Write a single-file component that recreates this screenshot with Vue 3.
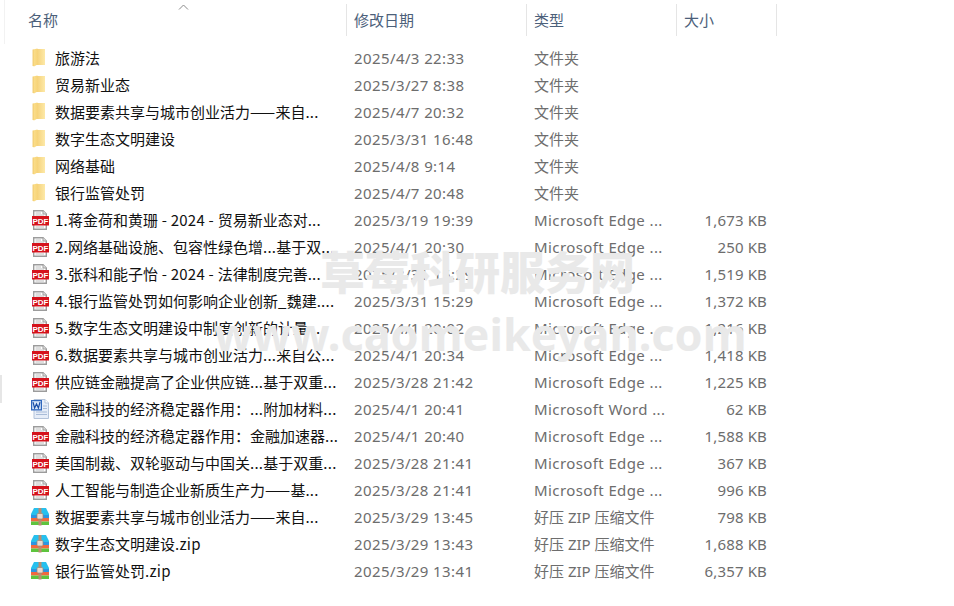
<script setup>
const PDF = 'pdf', DIR = 'dir', DOC = 'doc', ZIP = 'zip'
const columns = [
  { label: '名称', cls: 'c-name' },
  { label: '修改日期', cls: 'c-date' },
  { label: '类型', cls: 'c-type' },
  { label: '大小', cls: 'c-size' }
]
const edge = 'Microsoft Edge ...'
const splitName = (text) =>
  text.split(/([\x00-\x7f—]+)/).filter(Boolean).map((t) => ({
    t,
    latin: /^[\x00-\x7f—]/.test(t)
  }))
const rows = [
  [DIR, '旅游法', '2025/4/3 22:33', '文件夹', ''],
  [DIR, '贸易新业态', '2025/3/27 8:38', '文件夹', ''],
  [DIR, '数据要素共享与城市创业活力——来自...', '2025/4/7 20:32', '文件夹', ''],
  [DIR, '数字生态文明建设', '2025/3/31 16:48', '文件夹', ''],
  [DIR, '网络基础', '2025/4/8 9:14', '文件夹', ''],
  [DIR, '银行监管处罚', '2025/4/7 20:48', '文件夹', ''],
  [PDF, '1.蒋金荷和黄珊 - 2024 - 贸易新业态对...', '2025/3/19 19:39', edge, '1,673 KB'],
  [PDF, '2.网络基础设施、包容性绿色增...基于双...', '2025/4/1 20:30', edge, '250 KB'],
  [PDF, '3.张科和能子怡 - 2024 - 法律制度完善...', '2025/3/31 15:29', edge, '1,519 KB'],
  [PDF, '4.银行监管处罚如何影响企业创新_魏建....', '2025/3/31 15:29', edge, '1,372 KB'],
  [PDF, '5.数字生态文明建设中制度创新的计量 ...', '2025/4/1 20:02', edge, '1,216 KB'],
  [PDF, '6.数据要素共享与城市创业活力...来自公...', '2025/4/1 20:34', edge, '1,418 KB'],
  [PDF, '供应链金融提高了企业供应链...基于双重...', '2025/3/28 21:42', edge, '1,225 KB'],
  [DOC, '金融科技的经济稳定器作用：...附加材料...', '2025/4/1 20:41', 'Microsoft Word ...', '62 KB'],
  [PDF, '金融科技的经济稳定器作用：金融加速器...', '2025/4/1 20:40', edge, '1,588 KB'],
  [PDF, '美国制裁、双轮驱动与中国关...基于双重...', '2025/3/28 21:41', edge, '367 KB'],
  [PDF, '人工智能与制造企业新质生产力——基...', '2025/3/28 21:41', edge, '996 KB'],
  [ZIP, '数据要素共享与城市创业活力——来自...', '2025/3/29 13:45', '好压 ZIP 压缩文件', '798 KB'],
  [ZIP, '数字生态文明建设.zip', '2025/3/29 13:43', '好压 ZIP 压缩文件', '1,688 KB'],
  [ZIP, '银行监管处罚.zip', '2025/3/29 13:41', '好压 ZIP 压缩文件', '6,357 KB']
].map(([kind, name, date, type, size]) => ({
  kind, name, parts: splitName(name), date, type, size, wideType: type.startsWith('Microsoft')
}))
</script>

<template>
  <div class="explorer">
    <svg class="sort" width="11" height="6" viewBox="0 0 11 6"><path d="M1 5.5 L5.5 1 L10 5.5" fill="none" stroke="#8a8a8a" stroke-width="1"/></svg>
    <header class="head">
      <div v-for="c in columns" :key="c.label" class="hcell" :class="c.cls">{{ c.label }}</div>
    </header>
    <div class="list">
      <div v-for="r in rows" :key="r.name + r.date" class="row">
        <div class="c-name namecell">
          <span class="icon">
            <svg v-if="r.kind === 'dir'" width="20" height="20" viewBox="0 0 20 20">
              <defs>
                <linearGradient id="fold" x1="0" x2="1" y1="0" y2="0">
                  <stop offset="0" stop-color="#f4cf74"/><stop offset="1" stop-color="#fde9a8"/>
                </linearGradient>
                <linearGradient id="flap" x1="0" x2="1" y1="0" y2="0">
                  <stop offset="0" stop-color="#fbdf8f"/><stop offset="1" stop-color="#f7d478"/>
                </linearGradient>
              </defs>
              <path d="M7 1 H16 V17 H7 Z" fill="url(#fold)"/>
              <path d="M4 1.5 L8.5 .5 V16.5 L5 18.5 L4 18 Z" fill="url(#flap)"/>
              <path d="M4 1.5 V18" stroke="#eec25c" stroke-width=".8"/>
            </svg>
            <svg v-else-if="r.kind === 'pdf'" width="20" height="20" viewBox="0 0 20 20">
              <path d="M4.7 .7 H14 L17.3 4 V19.3 H4.7 Z" fill="#fff" stroke="#9c9c9c" stroke-width="1.4"/>
              <path d="M14 .7 V4 H17.3" fill="#e6e6e6" stroke="#9c9c9c"/>
              <path d="M6.5 3 H12 M6.5 5 H15 M6.5 17 H15" stroke="#bdbdbd"/>
              <rect x="3" y="6" width="17" height="9.5" fill="#d5121c"/>
              <text x="11.5" y="13.7" text-anchor="middle" class="pdftext">PDF</text>
            </svg>
            <svg v-else-if="r.kind === 'doc'" width="20" height="20" viewBox="0 0 20 20">
              <path d="M5 .5 H16 L19.5 4 V19.5 H5 Z" fill="#e6edf8" stroke="#b3c3da"/>
              <path d="M16 .5 V4 H19.5" fill="#fff" stroke="#b3c3da"/>
              <path d="M14 7 H18 M14 9.5 H18 M7 13 H18 M7 15.5 H18" stroke="#a9bcd8"/>
              <rect x="2" y="1" width="11" height="10.5" fill="#2f67bd"/>
              <rect x="3.2" y="2.2" width="8.6" height="8" fill="#d6e5f8"/>
              <path d="M4 3.2 L5.6 9 L7.5 5 L9.4 9 L11 3.2" fill="none" stroke="#1a4ea6" stroke-width="1.2"/>
            </svg>
            <svg v-else width="20" height="20" viewBox="0 0 20 20">
              <path d="M5 1 H17 L20 7 V8 H2 V7 Z" fill="#27c0ee"/>
              <rect x="2" y="8" width="18" height="3" fill="#2d95e2"/>
              <rect x="2" y="11" width="18" height="3.5" fill="#f0693f"/>
              <rect x="2" y="14.5" width="18" height="3.5" fill="#5ec43e"/>
              <rect x="9.5" y="1" width="3" height="17.5" fill="#b98d72"/>
              <rect x="8" y="6.5" width="6" height="5.5" rx="1" fill="#e9dcd2" stroke="#a8826c" stroke-width=".7"/>
            </svg>
          </span>
          <span class="name"><span v-for="(p, i) in r.parts" :key="i" :class="{ latin: p.latin }">{{ p.t }}</span></span>
        </div>
        <div class="c-date cell wide">{{ r.date }}</div>
        <div class="c-type cell" :class="{ wide: r.wideType }">{{ r.type }}</div>
        <div class="c-size cell size">{{ r.size }}</div>
      </div>
    </div>
    <div class="rail"></div>
    <div class="tick"></div>
    <div class="mark mark-cn">草莓科研服务网</div>
    <div class="mark mark-en">www.caomeikeyan.com</div>
  </div>
</template>

<style scoped>
.explorer {
  position: relative;
  width: 954px;
  height: 606px;
  overflow: hidden;
  background: #fff;
  font-family: "Noto Sans CJK SC", "Noto Sans", sans-serif;
  font-size: 15px;
}
.head {
  display: flex;
  height: 32px;
  margin-top: 4px;
  padding-left: 20px;
}
.hcell {
  box-sizing: border-box;
  padding-left: 7px;
  line-height: 32px;
  color: #4c607a;
  border-right: 1px solid #e5e5e5;
}
.hcell.c-name { padding-left: 8px; }
.c-name { width: 327px; flex: none; }
.c-date { width: 180px; flex: none; }
.c-type { width: 150px; flex: none; }
.c-size { width: 100px; flex: none; }
.list {
  padding: 9px 0 0 20px;
}
.row {
  display: flex;
  height: 27px;
  line-height: 27px;
  white-space: nowrap;
}
.namecell {
  display: flex;
  align-items: center;
  box-sizing: border-box;
  padding-left: 9px;
  color: #111;
}
.icon {
  width: 20px;
  height: 20px;
  margin-top: -1px;
  margin-right: 6px;
  flex: none;
  display: flex;
}
.name {
  overflow: hidden;
  margin-top: -2px;
}
.latin { letter-spacing: .25px; }
.cell {
  box-sizing: border-box;
  padding-left: 7px;
  color: #6d6d6d;
  font-family: "Noto Sans", "Noto Sans CJK SC", sans-serif;
}
.wide { letter-spacing: .4px; }
.size {
  padding: 0 10px 0 0;
  letter-spacing: .15px;
  text-align: right;
}
.pdftext {
  font: bold 8px "Liberation Sans", sans-serif;
  fill: #fff;
}
.sort {
  position: absolute;
  left: 178px;
  top: 4px;
}
.rail {
  position: absolute;
  left: 4px;
  top: 0;
  height: 44px;
  width: 1px;
  background: #f2f2f2;
}
.tick {
  position: absolute;
  left: 0;
  top: 375px;
  width: 2px;
  height: 28px;
  background: #e6e6e6;
}
.mark {
  position: absolute;
  color: #e9e9e9;
  font-weight: 900;
  white-space: nowrap;
  font-family: "Noto Sans CJK SC", "Noto Sans", sans-serif;
  pointer-events: none;
}
.mark-cn {
  left: 320px;
  top: 238px;
  font-size: 45px;
  line-height: 65px;
}
.mark-en {
  left: 214px;
  top: 301px;
  font-size: 45px;
  line-height: 66px;
  font-weight: 700;
  font-family: "Noto Sans", sans-serif;
}
</style>
